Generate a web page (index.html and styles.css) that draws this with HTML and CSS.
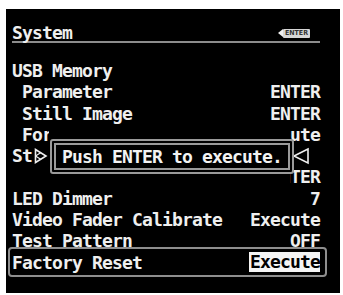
FILE: index.html
```html
<!DOCTYPE html>
<html>
<head>
<meta charset="utf-8">
<link rel="stylesheet" href="styles.css">
</head>
<body>
<div class="screen">
  <div class="header">
    <span class="title">System</span>
    <span class="enter-icon"><span class="tri"></span><span class="enter-box">ENTER</span></span>
  </div>
  <div class="list">
    <div class="row"><span>USB Memory</span></div>
    <div class="row sub"><span>Parameter</span><span>ENTER</span></div>
    <div class="row sub"><span>Still Image</span><span>ENTER</span></div>
    <div class="row sub"><span>Format</span><span>Execute</span></div>
    <div class="row"><span class="lbl">St<svg class="arrow-r" width="14" height="16" viewBox="0 0 14 16"><polygon points="1.5,1.5 12,8 1.5,14.5" fill="none" stroke="#eee" stroke-width="1.6"/><line x1="1.5" y1="8" x2="7" y2="4.5" stroke="#eee" stroke-width="1.2"/><line x1="1.5" y1="8" x2="7" y2="11.5" stroke="#eee" stroke-width="1.2"/></svg></span><span class="val"><svg class="arrow-l" width="18" height="18" viewBox="0 0 18 18"><polygon points="16,2 2,9 16,16" fill="none" stroke="#eee" stroke-width="1.6"/></svg></span></div>
    <div class="row"><span></span><span>ENTER</span></div>
    <div class="row"><span>LED Dimmer</span><span>7</span></div>
    <div class="row"><span>Video Fader Calibrate</span><span>Execute</span></div>
    <div class="row"><span>Test Pattern</span><span>OFF</span></div>
    <div class="row factory"><span>Factory Reset</span><span class="hl">Execute</span></div>
  </div>
  <div class="overlay">
    <div class="popup">
      <div class="popup-inner">Push ENTER to execute.</div>
    </div>
  </div>
</div>
</body>
</html>
```

FILE: styles.css
```css
html, body {
  margin: 0;
  padding: 0;
  background: #ffffff;
}

.screen {
  position: relative;
  margin: 9px 0 0 6px;
  width: 334px;
  height: 284px;
  background: #000;
  color: #efefef;
  font-family: "DejaVu Sans Mono", "Liberation Mono", monospace;
  font-weight: bold;
  font-size: 18px;
  letter-spacing: -0.84px;
  overflow: hidden;
}

.header {
  display: flex;
  justify-content: space-between;
  align-items: center;
  margin: 0 20px 0 6px;
  padding: 16px 10px 0 0;
  line-height: 16px;
  height: 16px;
  border-bottom: 2px solid #8c8c8c;
}

.title {
  display: block;
  height: 16px;
}

.enter-icon {
  display: flex;
  align-items: center;
}

.tri {
  width: 0;
  height: 0;
  border-top: 4px solid transparent;
  border-bottom: 4px solid transparent;
  border-right: 5px solid #f0f0f0;
}

.enter-box {
  background: #d6d6d6;
  color: #333;
  font-family: "DejaVu Sans Condensed", sans-serif;
  font-size: 7px;
  letter-spacing: 0;
  line-height: 9px;
  height: 9px;
  padding: 0 2px;
  border-radius: 1px;
}

.list {
  margin-top: 17px;
  padding: 0 20px 0 6px;
}

.row {
  display: flex;
  justify-content: space-between;
  line-height: 21.3px;
  height: 21.3px;
  white-space: pre;
}

.row.sub {
  padding-left: 10px;
}

.lbl, .val {
  display: flex;
  align-items: center;
}

.arrow-r {
  margin-left: 2px;
}

.arrow-l {
  margin-right: 10px;
}

.row.factory {
  margin: -5px -7px 0 -4px;
  padding: 3px 5px 2px 2px;
  border: 2px solid #8e8e8e;
  border-radius: 4px;
}

.hl {
  background: #f4f4f4;
  color: #000;
  line-height: 20px;
  height: 20px;
  margin-top: 0.5px;
  padding-left: 1px;
}

.overlay {
  position: absolute;
  top: 118px;
  left: 43px;
  width: 241px;
  height: 59px;
  padding: 12px 0 0 1px;
  box-sizing: border-box;
  background: #000;
}

.popup {
  width: 236px;
  border: 2px solid #9a9a9a;
  border-radius: 3px;
  padding: 2px;
  background: #000;
}

.popup-inner {
  border: 2px solid #9a9a9a;
  height: 23px;
  line-height: 23px;
  padding-left: 6px;
  color: #f2f2f2;
}
```
